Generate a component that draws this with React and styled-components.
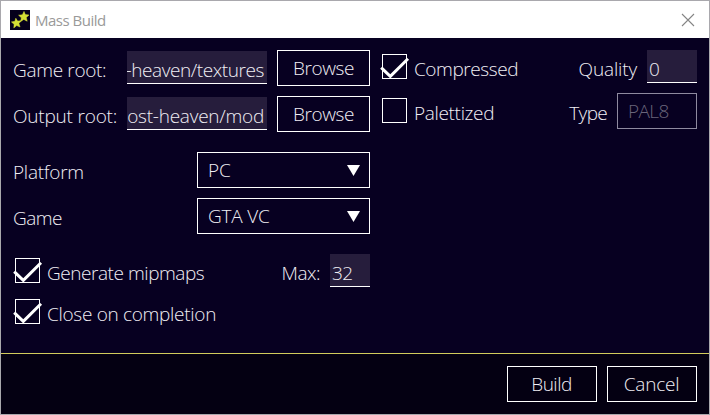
import React from "react";
import styled, { createGlobalStyle } from "styled-components";

const Global = createGlobalStyle`
  * { box-sizing: border-box; }
  body { margin: 0; overflow: hidden; }
`;

const Window = styled.div`
  width: 710px;
  height: 415px;
  display: flex;
  flex-direction: column;
  border: 1px solid #a9a8ad;
  background: #070021;
  color: #f1eff5;
  font-family: "Open Sans", "Noto Sans", sans-serif;
  font-weight: 300;
  font-size: 19px;
`;

const TitleBar = styled.header`
  height: 37px;
  flex: none;
  display: flex;
  align-items: center;
  padding: 0 14px 0 9px;
  background: #fff;
`;

const Title = styled.span`
  flex: 1;
  margin-left: 5px;
  font-weight: 400;
  font-size: 15px;
  line-height: 20px;
  letter-spacing: -0.5px;
  color: #999;
`;

const Main = styled.main`
  height: 315px;
  flex: none;
  display: flex;
  gap: 12px;
  padding: 12px 12px 0;
`;

const Column = styled.div`
  width: ${(p) => p.$w}px;
  display: flex;
  flex-direction: column;
`;

const Row = styled.div`
  display: flex;
  align-items: flex-start;
  height: ${(p) => p.$h || 36}px;
  margin-top: ${(p) => p.$top || 0}px;
`;

const Text = styled.span`
  display: block;
  line-height: 26px;
  white-space: nowrap;
  letter-spacing: ${(p) => p.$ls || 0}px;
  margin-top: ${(p) => p.$y || 0}px;
  margin-left: ${(p) => (p.$push ? "auto" : `${p.$x || 0}px`)};
  margin-right: ${(p) => p.$r || 0}px;
`;

const Field = styled.div`
  width: ${(p) => p.$w}px;
  height: 33px;
  flex: none;
  display: flex;
  justify-content: ${(p) => (p.$end ? "flex-end" : "flex-start")};
  margin-top: ${(p) => p.$y || 0}px;
  margin-left: ${(p) => (p.$push ? "auto" : "0")};
  margin-right: ${(p) => p.$r || 0}px;
  padding: 0 2px;
  overflow: hidden;
  background: #261d3c;
  border-bottom: 1px solid #fff;
`;

const Button = styled.button`
  width: ${(p) => p.$w}px;
  height: 36px;
  flex: none;
  display: flex;
  justify-content: center;
  align-items: flex-start;
  padding: 0;
  background: transparent;
  border: 1px solid #fff;
  color: inherit;
  font: inherit;
`;

const Select = styled.div`
  width: ${(p) => p.$w}px;
  height: 36px;
  flex: none;
  display: flex;
  justify-content: space-between;
  margin-left: ${(p) => (p.$push ? "auto" : "0")};
  padding: 0 9px 0 10px;
  border: 1px solid ${(p) => (p.$disabled ? "#8e8a9f" : "#fff")};
  color: ${(p) => (p.$disabled ? "#6a657b" : "inherit")};
`;

const Arrow = styled.svg`
  width: 13px;
  height: 11px;
  margin-top: 12px;
`;

const Box = styled.svg`
  width: 29px;
  height: 25px;
  flex: none;
  margin: ${(p) => p.$y || 0}px 0 0 ${(p) => p.$x || 0}px;
  overflow: visible;
`;

const Footer = styled.footer`
  flex: 1;
  display: flex;
  justify-content: flex-end;
  gap: 10px;
  padding: 12px 12px 0;
  border-top: 1px solid #d2cb5c;
  background: #040012;
`;

const Logo = () => (
  <svg width="20" height="20" viewBox="0 0 20 20">
    <rect width="20" height="20" fill="#05001b" />
    <g fill="#d4df35" stroke="#d4df35" strokeWidth=".5">
      <path d="M14 1.4 15.3 4.6 19 5 16.3 7.5 17.2 11.2 13.8 9.4 10.6 11.6 11.3 7.8 8.6 5.2 12.4 4.8Z" />
      <path d="M5.8 8.2 7.6 11.1 11.2 10.7 8.9 13.6 10.1 17 6.7 15.6 3.8 17.9 4.1 14.3 1.4 11.9 4.9 11.3Z" />
    </g>
  </svg>
);

const Check = ({ checked, x, y }) => (
  <Box viewBox="0 0 29 25" $x={x} $y={y}>
    <rect x="2.5" y=".5" width="24" height="24" fill="none" stroke="#fff" />
    {checked && <path d="M1.2 13.7 10.3 22.4 28 4.8" fill="none" stroke="#fff" strokeWidth="3" />}
  </Box>
);

const Down = () => (
  <Arrow viewBox="0 0 13 11">
    <path d="M0 0H13L6.5 11Z" fill="#fff" />
  </Arrow>
);

export default function App() {
  return (
    <>
      <Global />
      <Window>
        <TitleBar>
          <Logo />
          <Title>Mass Build</Title>
          <svg width="14" height="14" viewBox="0 0 14 14">
            <path d="M1 1 13 13M13 1 1 13" stroke="#858585" strokeWidth="1.1" />
          </svg>
        </TitleBar>
        <Main>
          <Column $w={357}>
            <Row>
              <Text $y={7} $ls={-0.32}>Game root:</Text>
              <Field $w={140} $y={1} $end $push $r={10}>
                <Text $y={6} $r={1} $ls={-0.42}>-heaven/textures</Text>
              </Field>
              <Button $w={93}><Text $y={4} $ls={-0.45}>Browse</Text></Button>
            </Row>
            <Row $top={10}>
              <Text $y={7} $ls={-0.2}>Output root:</Text>
              <Field $w={140} $y={1} $end $push $r={10}>
                <Text $y={6} $r={1} $ls={-0.25}>ost-heaven/mod</Text>
              </Field>
              <Button $w={93}><Text $y={4} $ls={-0.45}>Browse</Text></Button>
            </Row>
            <Row $top={20}>
              <Text $y={7} $ls={-0.25}>Platform</Text>
              <Select $w={173} $push><Text $y={4}>PC</Text><Down /></Select>
            </Row>
            <Row $top={10}>
              <Text $y={7} $ls={-0.5}>Game</Text>
              <Select $w={173} $push><Text $y={4} $ls={-0.2}>GTA VC</Text><Down /></Select>
            </Row>
            <Row $top={20} $h={33}>
              <Check checked y={4} />
              <Text $x={5} $y={6} $ls={-0.45}>Generate mipmaps</Text>
              <Text $push $y={6} $r={10} $ls={-0.5}>Max:</Text>
              <Field $w={40}><Text $y={6} $ls={-0.6}>32</Text></Field>
            </Row>
            <Row $top={12} $h={25}>
              <Check checked />
              <Text $x={5} $y={2} $ls={-0.3}>Close on completion</Text>
            </Row>
          </Column>
          <Column $w={315}>
            <Row $h={33}>
              <Check checked x={-2} y={4} />
              <Text $x={5} $y={6} $ls={-0.42}>Compressed</Text>
              <Text $push $y={6} $r={10} $ls={-0.15}>Quality</Text>
              <Field $w={50}><Text $y={6}>0</Text></Field>
            </Row>
            <Row $top={10}>
              <Check x={-2} y={5} />
              <Text $x={5} $y={7} $ls={-0.33}>Palettized</Text>
              <Text $push $y={7} $r={10} $ls={-0.7}>Type</Text>
              <Select $w={80} $disabled><Text $y={4} $ls={-0.6}>PAL8</Text></Select>
            </Row>
          </Column>
        </Main>
        <Footer>
          <Button $w={90}><Text $y={4} $r={1} $ls={-0.5}>Build</Text></Button>
          <Button $w={90}><Text $y={4} $r={1} $ls={-0.2}>Cancel</Text></Button>
        </Footer>
      </Window>
    </>
  );
}
